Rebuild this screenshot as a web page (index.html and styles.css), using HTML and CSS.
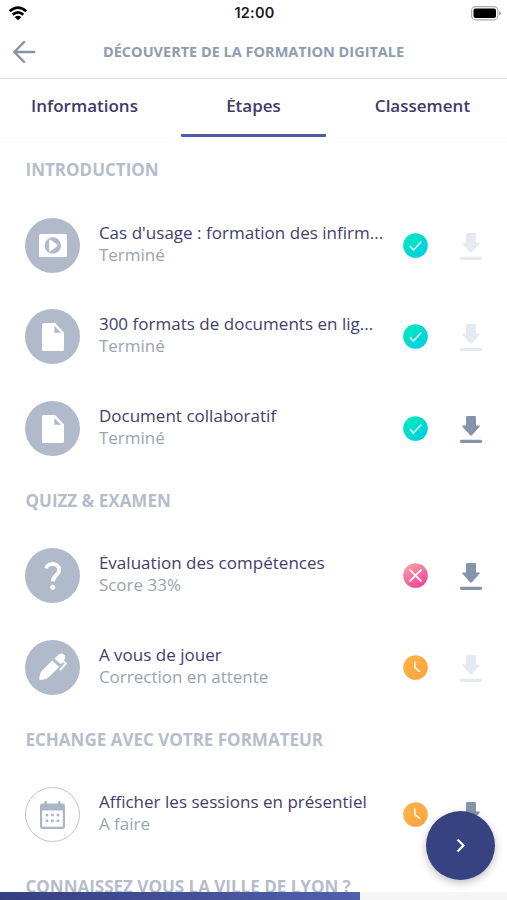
FILE: index.html
```html
<!DOCTYPE html>
<html lang="fr">
<head>
<meta charset="utf-8">
<title>Découverte de la formation digitale</title>
<link rel="stylesheet" href="styles.css">
</head>
<body>
<svg class="defs" width="0" height="0" aria-hidden="true">
  <defs>
    <linearGradient id="teal" x1="0" y1="0" x2="1" y2="1"><stop offset="0" stop-color="#00edb4"/><stop offset="1" stop-color="#00c8ec"/></linearGradient>
    <linearGradient id="pink" x1="0.2" y1="0" x2="0.8" y2="1"><stop offset="0" stop-color="#f5a3a3"/><stop offset="1" stop-color="#f23c96"/></linearGradient>
    <linearGradient id="amber" x1="0" y1="0" x2="1" y2="1"><stop offset="0" stop-color="#fcb548"/><stop offset="1" stop-color="#fba23c"/></linearGradient>
    <symbol id="done" viewBox="0 0 25 25"><circle cx="12.5" cy="12.5" r="12.3" fill="url(#teal)"/><path d="M6.9 13.1l3.5 3.9 7.9-8.5" fill="none" stroke="#d5fbf5" stroke-width="1.7"/></symbol>
    <symbol id="failed" viewBox="0 0 25 25"><circle cx="12.5" cy="12.5" r="12.3" fill="url(#pink)"/><path d="M7 7l11 11M18 7L7 18" fill="none" stroke="#ffeef5" stroke-width="1.8" stroke-linecap="round"/></symbol>
    <symbol id="pending" viewBox="0 0 25 25"><circle cx="12.5" cy="12.5" r="12.3" fill="url(#amber)"/><path d="M11.9 7v5.8l4.7 3.4" fill="none" stroke="#fff0d8" stroke-width="1.7" stroke-linecap="round"/></symbol>
    <symbol id="download" viewBox="0 0 22 27"><path d="M7.200 0h7.600q1.200 0 1.200 1.200v8.400h3q1.600 0 .6 1.200l-7.500 8.300q-1.100 1.100-2.200 0L2.400 10.800q-1-1.200.6-1.200h3V1.200Q6 0 7.200 0z"/><rect x="0" y="23.800" width="22" height="3.100" rx="1.300"/></symbol>
    <symbol id="doc" viewBox="0 0 22 28"><path fill="#fff" d="M1.500 0H13.200L22 9.500V26.500a1.500 1.500 0 0 1-1.500 1.500h-19A1.500 1.500 0 0 1 0 26.500v-25A1.500 1.500 0 0 1 1.500 0z"/><path fill="#b1bacb" d="M12.300 3v6.800H19z"/></symbol>
  </defs>
</svg>
<div class="screen">
  <div class="status">
    <svg class="wifi" width="20" height="15" viewBox="0 0 20 15" fill="none" stroke="#000" stroke-width="2.700"><path d="M1.700 5.300Q10-1.900 18.300 5.300"/><path d="M4.700 8.600Q10 4.100 15.300 8.600"/><path fill="#000" stroke="none" d="M6.700 11q3.300-2.600 6.600 0L10 14.300z"/></svg>
    <span class="time">12:00</span>
    <svg class="battery" width="31" height="15" viewBox="0 0 31 15"><rect x=".6" y=".6" width="26.300" height="13.300" rx="4" fill="#fff" stroke="#aaa" stroke-width="1.100"/><rect x="2.500" y="2.500" width="22.500" height="9.500" rx="2"/><path d="M28.200 5q1.600.6 1.600 2.200t-1.600 2.200z" fill="#999"/></svg>
  </div>
  <header class="header">
    <svg class="back" width="23" height="22" viewBox="0 0 23 22" fill="none" stroke="#8595a8" stroke-width="2.400" stroke-linecap="round" stroke-linejoin="round"><path d="M11 1.200L1.300 11 11 20.800M1.300 11H21.200"/></svg>
    <h1 class="title">DÉCOUVERTE DE LA FORMATION DIGITALE</h1>
  </header>
  <nav class="tabs">
    <div class="tab"><span>Informations</span></div>
    <div class="tab active"><span>Étapes</span></div>
    <div class="tab"><span>Classement</span></div>
  </nav>
  <main class="list">
    <h2 class="section">INTRODUCTION</h2>
    <div class="row">
      <div class="avatar"><svg width="28" height="23" viewBox="0 0 28 23"><rect width="28" height="23" rx="1.500" fill="#fff"/><circle cx="13.800" cy="11.500" r="8.200" fill="#b1bacb"/><path d="M10.200 6.200q0-1.200 1-.6l7 5q1 .8 0 1.600l-7 5q-1 .6-1-.6z" fill="#fff"/></svg></div>
      <div class="text"><div class="name">Cas d'usage : formation des infirm...</div><div class="sub">Terminé</div></div>
      <svg class="state"><use href="#done"/></svg><svg class="dl off"><use href="#download"/></svg>
    </div>
    <div class="row">
      <div class="avatar"><svg width="22" height="28"><use href="#doc"/></svg></div>
      <div class="text"><div class="name">300 formats de documents en lig...</div><div class="sub">Terminé</div></div>
      <svg class="state"><use href="#done"/></svg><svg class="dl off"><use href="#download"/></svg>
    </div>
    <div class="row">
      <div class="avatar"><svg width="22" height="28"><use href="#doc"/></svg></div>
      <div class="text"><div class="name">Document collaboratif</div><div class="sub">Terminé</div></div>
      <svg class="state"><use href="#done"/></svg><svg class="dl"><use href="#download"/></svg>
    </div>
    <h2 class="section">QUIZZ &amp; EXAMEN</h2>
    <div class="row">
      <div class="avatar"><svg width="18" height="28" viewBox="0 0 18 28"><path d="M2.200 6.300C3.500 .3 15.300 .4 15.300 8 15.300 13.200 8.800 13.400 8.800 19.600" fill="none" stroke="#fff" stroke-width="3.900"/><circle cx="8.700" cy="25.300" r="2.500" fill="#fff"/></svg></div>
      <div class="text"><div class="name">Évaluation des compétences</div><div class="sub">Score 33%</div></div>
      <svg class="state"><use href="#failed"/></svg><svg class="dl"><use href="#download"/></svg>
    </div>
    <div class="row">
      <div class="avatar"><svg width="28" height="28" viewBox="0 0 28 28"><path fill="#fff" d="M13.300 7.400l6.900 6.700L9.200 24.800q-2.500 2-7.800 2.200-1.300 0-1.200-1.200.2-4.800 2.200-7.500zM15.400 5.600L19 2.200q.6-1.800 2.600-1.500 1.200-.9 2.600.3l1.200 1.100q1.300 1.200.6 2.800 0 1.500-1.300 2.700l-2.600 3.900z"/><path d="M23.700 7.900l3.200 2.600-6 6.600" fill="none" stroke="#fff" stroke-width="1.900"/></svg></div>
      <div class="text"><div class="name">A vous de jouer</div><div class="sub">Correction en attente</div></div>
      <svg class="state"><use href="#pending"/></svg><svg class="dl off"><use href="#download"/></svg>
    </div>
    <h2 class="section">ECHANGE AVEC VOTRE FORMATEUR</h2>
    <div class="row">
      <div class="avatar outline"><svg width="25" height="28" viewBox="0 0 25 28" fill="#aab5c8"><path d="M2.500 2.500h20A2.500 2.500 0 0 1 25 5v20.500a2.500 2.500 0 0 1-2.500 2.500h-20A2.500 2.500 0 0 1 0 25.500V5a2.500 2.500 0 0 1 2.500-2.500z"/><rect x="4.500" y="0" width="2.500" height="4" rx="1"/><rect x="18" y="0" width="2.500" height="4" rx="1"/><rect x="2.200" y="9.500" width="20.600" height="16.200" fill="#fff"/><rect x="5.700" y="12.700" width="2.600" height="2.600"/><rect x="11.200" y="12.700" width="2.600" height="2.600"/><rect x="16.700" y="12.700" width="2.600" height="2.600"/><rect x="5.700" y="18.500" width="2.600" height="2.600"/><rect x="11.200" y="18.500" width="2.600" height="2.600"/><rect x="16.700" y="18.500" width="2.600" height="2.600"/></svg></div>
      <div class="text"><div class="name">Afficher les sessions en présentiel</div><div class="sub">A faire</div></div>
      <svg class="state"><use href="#pending"/></svg><svg class="dl"><use href="#download"/></svg>
    </div>
    <h2 class="section">CONNAISSEZ VOUS LA VILLE DE LYON ?</h2>
  </main>
  <div class="fab"><svg width="10" height="15" viewBox="0 0 10 15" fill="none" stroke="#fff" stroke-width="2.200"><path d="M1.500 1.500l6 6-6 6"/></svg></div>
  <div class="progress"><div class="bar"></div></div>
</div>
</body>
</html>
```
FILE: styles.css
```css
* { box-sizing: border-box; }
body { margin: 0; background: #fff; font-family: "Open Sans", sans-serif; }
h1, h2 { margin: 0; }
svg { display: block; flex: none; }
.defs { position: absolute; }
.screen { position: relative; width: 507px; height: 900px; overflow: hidden; display: flex; flex-direction: column; background: #fff; }
.status { flex: none; height: 26px; display: grid; grid-template-columns: 1fr auto 1fr; align-items: center; padding: 0 5px 0 8px; }
.time { margin-right: 1px; font: 600 14.500px/26px Inter, sans-serif; color: #1c1c1c; letter-spacing: 0.2px; }
.battery { justify-self: end; }
.header { flex: none; height: 53px; border-bottom: 1px solid #dedfe1; display: flex; align-items: center; padding-left: 12.500px; }
.title { flex: 1; padding-left: 67.500px; font-size: 14.500px; line-height: 20px; font-weight: 700; color: #8e9caf; white-space: nowrap; }
.tabs { flex: none; height: 59px; display: grid; grid-template-columns: 1fr 1fr 1fr; justify-items: center; border-bottom: 1px solid #fafafa; }
.tab { width: 145px; padding-top: 15px; text-align: center; font-size: 17px; line-height: 23px; font-weight: 600; color: #3e3b68; }
.tab span { display: inline-block; clip-path: inset(4px 0 0 0); }
.active { border-bottom: 3px solid #4f5ba3; border-radius: 1px; }
.list { flex: none; padding-top: 5.900px; }
.section { height: 55.500px; padding: 14.300px 0 0 25.500px; font-size: 17px; line-height: 23px; font-weight: 700; color: #b5bdcc; white-space: nowrap; }
.row { height: 91.700px; display: flex; align-items: center; padding: 0 24.500px 0 25.400px; }
.avatar { flex: none; width: 55px; height: 55px; border-radius: 50%; background: #b1bacb; display: flex; align-items: center; justify-content: center; }
.outline { background: #fff; border: 1.500px solid #bcc4d1; }
.text { flex: none; width: 329.500px; padding: 0 0 3px 18.500px; white-space: nowrap; font-size: 17px; line-height: 22px; }
.name { color: #423e6b; letter-spacing: 0.02px; clip-path: inset(3px 0 -3px 0); }
.sub { color: #99a4b2; }
.state { flex: none; width: 25px; height: 25px; margin-left: -7px; }
.dl { flex: none; width: 22px; height: 27px; margin: 2px 0 0 32.500px; fill: #8495ab; }
.off { fill: #e5eaf0; }
.fab { position: absolute; left: 426px; top: 811px; width: 69px; height: 69px; border-radius: 50%; background: #374380; display: flex; align-items: center; justify-content: center; box-shadow: 0 3px 9px rgba(0,0,0,0.25); }
.progress { position: absolute; left: 0; bottom: 0; width: 100%; height: 8px; background: #f5f5f6; }
.bar { width: 360px; height: 8px; background: linear-gradient(90deg, #354080, #5160ad); }
```
